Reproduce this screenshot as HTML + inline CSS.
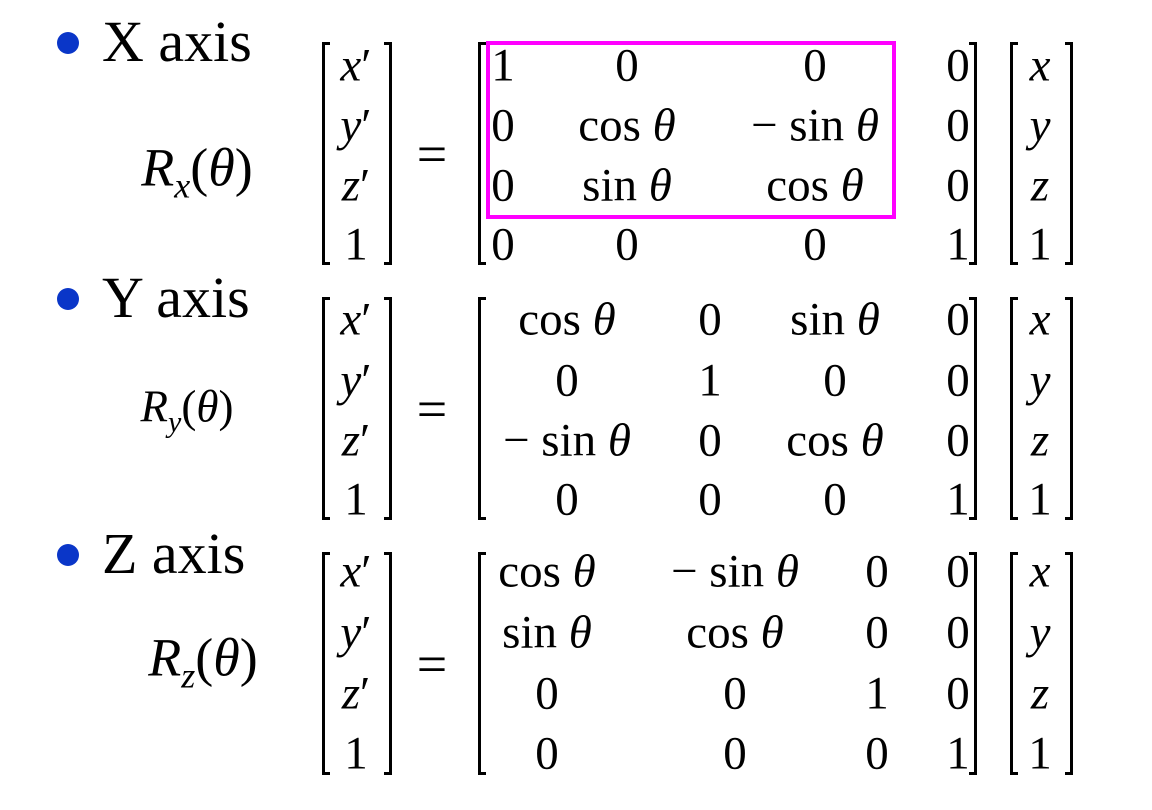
<!DOCTYPE html>
<html><head><meta charset="utf-8"><style>
html,body{margin:0;padding:0;background:#fff;width:1152px;height:810px;overflow:hidden;position:relative}
.t{position:absolute;font-family:"Liberation Serif",serif;color:#000;white-space:nowrap;line-height:1;transform:translate(-50%,-50%)}
.b{position:absolute;border:3px solid #000;width:8px;box-sizing:border-box}
.l{border-right:none}.r{border-left:none}
.dot{position:absolute;width:22px;height:22px;border-radius:50%;background:#0a36c8}
.lab{position:absolute;font-family:"Liberation Serif",serif;font-size:58px;line-height:1}
i{font-style:italic}
</style></head><body>
<div class="dot" style="left:57px;top:32px"></div>
<div class="dot" style="left:57px;top:288px"></div>
<div class="dot" style="left:57px;top:544px"></div>
<div class="lab" style="left:102px;top:13px">X axis</div>
<div class="lab" style="left:102px;top:269px">Y axis</div>
<div class="lab" style="left:102px;top:525px">Z axis</div>
<div style="position:absolute;left:486px;top:41px;width:410px;height:178px;border:4px solid #f0f;box-sizing:border-box"></div>
<div id="c"></div>
<script>
var h='';
function t(x,y,s,fs){h+='<div class="t" style="left:'+x+'px;top:'+y+'px;font-size:'+(fs||47)+'px">'+s+'</div>';}
function br(x,y0,y1,side){h+='<div class="b '+side+'" style="left:'+x+'px;top:'+y0+'px;height:'+(y1-y0)+'px"></div>';}
var c='cos <i>θ</i>',s='sin <i>θ</i>',ms='− sin <i>θ</i>';
var M=[
 {y0:42,y1:265,rows:[66,126,186,245],cols:[503,627,815,958],
  v:[['1','0','0','0'],['0',c,ms,'0'],['0',s,c,'0'],['0','0','0','1']],R:'<i>R<sub style="font-size:36px">x</sub></i>(<i>θ</i>)',rx:197,ry:172,rf:54},
 {y0:297,y1:520,rows:[320,381,441,500],cols:[567,710,835,958],
  v:[[c,'0',s,'0'],['0','1','0','0'],[ms,'0',c,'0'],['0','0','0','1']],R:'<i>R<sub style="font-size:30px">y</sub></i>(<i>θ</i>)',rx:187,ry:411,rf:45},
 {y0:552,y1:775,rows:[572,633,694,754],cols:[547,735,877,958],
  v:[[c,ms,'0','0'],[s,c,'0','0'],['0','0','1','0'],['0','0','0','1']],R:'<i>R<sub style="font-size:36px">z</sub></i>(<i>θ</i>)',rx:203,ry:662,rf:54}
];
M.forEach(function(m){
 br(322,m.y0,m.y1,'l');br(384,m.y0,m.y1,'r');
 br(478,m.y0,m.y1,'l');br(969,m.y0,m.y1,'r');
 br(1010,m.y0,m.y1,'l');br(1065,m.y0,m.y1,'r');
 var vl=["<i>x</i>′","<i>y</i>′","<i>z</i>′","1"],vr=["<i>x</i>","<i>y</i>","<i>z</i>","1"];
 for(var r=0;r<4;r++){
  t(356,m.rows[r],vl[r]);t(1040,m.rows[r],vr[r]);
  for(var k=0;k<4;k++)t(m.cols[k],m.rows[r],m.v[r][k]);
 }
 t(432,(m.y0+m.y1)/2,'=',54);
 t(m.rx,m.ry,m.R,m.rf);
});
document.getElementById('c').innerHTML=h;
</script>
</body></html>
